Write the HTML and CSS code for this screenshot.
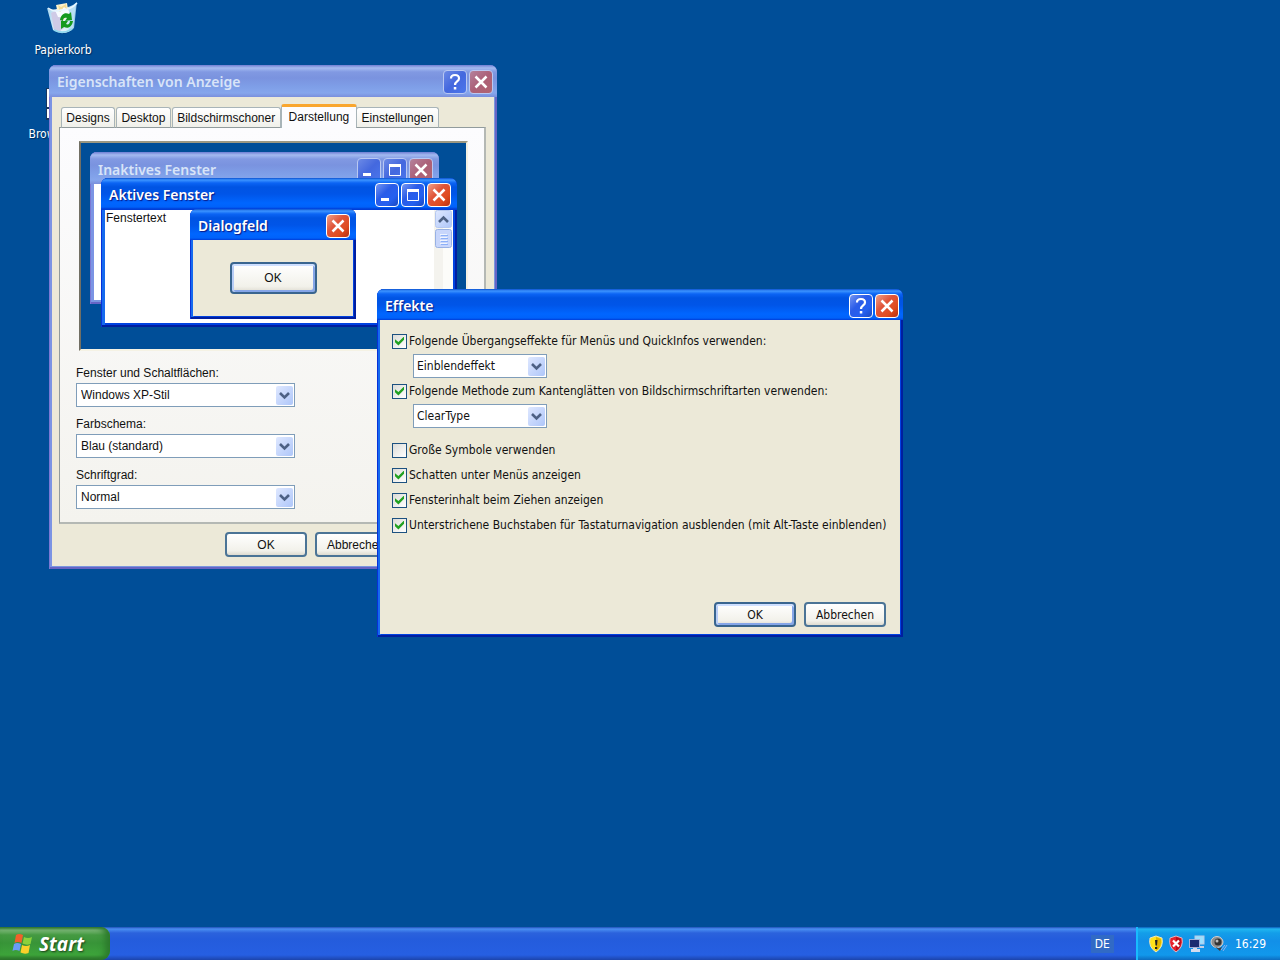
FILE: index.html
```html
<!DOCTYPE html>
<html lang="de">
<head>
<meta charset="utf-8">
<title>Eigenschaften von Anzeige</title>
<link rel="stylesheet" href="styles.css">
</head>
<body>
<svg width="0" height="0" class="defs" aria-hidden="true">
  <defs>
    <linearGradient id="btnface" x1="0" y1="0" x2="1" y2="1">
      <stop offset="0" stop-color="#dfe8ff"/><stop offset="1" stop-color="#aec6f9"/>
    </linearGradient>
    <linearGradient id="glass" x1="0" y1="0" x2="1" y2="0">
      <stop offset="0" stop-color="#9fd2ee"/><stop offset=".35" stop-color="#eef8fb"/><stop offset=".7" stop-color="#d3ecf5"/><stop offset="1" stop-color="#7ebce4"/>
    </linearGradient>
    <symbol id="arrow" viewBox="0 0 17 19">
      <rect width="17" height="19" rx="2" fill="url(#btnface)"/>
      <path d="M4 7l4.500 4.500L13 7" fill="none" stroke="#4d6185" stroke-width="2.600"/>
    </symbol>
    <symbol id="help" viewBox="0 0 20 20">
      <path d="M6 6.500C6 4 7.600 3 10 3s4 1.300 4 3.500c0 3-4 3-4 6.500" fill="none" stroke="currentColor" stroke-width="2.200"/>
      <rect x="8.800" y="15" width="2.500" height="2.500" fill="currentColor"/>
    </symbol>
    <symbol id="close" viewBox="0 0 20 20">
      <path d="M4.500 4.500l11 11M15.500 4.500l-11 11" fill="none" stroke="currentColor" stroke-width="2.500"/>
    </symbol>
    <symbol id="min" viewBox="0 0 20 20"><rect x="4" y="13" width="8" height="3" fill="currentColor"/></symbol>
    <symbol id="max" viewBox="0 0 20 20">
      <path d="M4.500 5v10.500h11V5" fill="none" stroke="currentColor"/><rect x="4" y="4" width="12" height="3" fill="currentColor"/>
    </symbol>
  </defs>
</svg>

<main class="desktop">
  <div class="icons">
    <div class="shortcut">
      <svg width="36" height="36" viewBox="0 0 36 36" aria-hidden="true">
        <path d="M5 10l6 22q8 4 15-1l7-26-5 2z" fill="#063c7a" opacity=".7"/>
        <path d="M2 8Q8 11 14 8Q24 9 32 2L29 28Q20 37 8 30Z" fill="url(#glass)"/>
        <path d="M11 5l11-2 2 13-9 7z" fill="#fbf3cf"/>
        <path d="M13 5l3 2 5-3 1 6-7 3z" fill="#f3dc94"/>
        <path d="M6 13l6-3 4 8 3 10-5 4-5-2z" fill="#cfcbe6"/>
        <path d="M10 10l5 2 4-5 5 4-1 7-10-1z" fill="#f7fbff"/>
        <path d="M24 8l7-4-3 23-4 4z" fill="#b9e0f4"/>
        <path d="M3 8Q10 13 16 10Q26 10 32 3" fill="none" stroke="#e9f7ff" stroke-width="1.500"/>
        <path d="M9 30q9 5 18-1" fill="none" stroke="#8fd8ef" stroke-width="2"/>
        <path d="M15 20c1-6 5-8 9-6l2-2 1 8-7 1 2-3c-2-1-4 0-4 3zM28 21c-1 6-5 8-9 6l-3 2v-8l7 0-2 3c2 1 4 0 4-3z" fill="#159a1d"/>
      </svg>
      <span>Papierkorb</span>
    </div>
    <div class="shortcut">
      <svg width="36" height="36" viewBox="0 0 36 36" aria-hidden="true">
        <rect x="1" y="4" width="34" height="32" fill="#17365f"/><rect x="2" y="5" width="32" height="18" fill="#fff"/><rect x="2" y="25" width="32" height="9" fill="#fff"/>
      </svg>
      <span>Browserwahl</span>
    </div>
  </div>

  <section class="window inactive properties" aria-label="Eigenschaften von Anzeige">
    <header class="titlebar">
      <h1>Eigenschaften von Anzeige</h1>
      <button class="cap" aria-label="Hilfe"><svg><use href="#help"/></svg></button>
      <button class="cap red" aria-label="Schließen"><svg><use href="#close"/></svg></button>
    </header>
    <div class="body">
      <nav class="tabs" role="tablist">
        <button role="tab" class="tab">Designs</button>
        <button role="tab" class="tab">Desktop</button>
        <button role="tab" class="tab">Bildschirmschoner</button>
        <button role="tab" class="tab selected" aria-selected="true">Darstellung</button>
        <button role="tab" class="tab">Einstellungen</button>
      </nav>
      <div class="page">
        <div class="preview">
          <div class="window inactive mini mini-inactive">
            <div class="titlebar">
              <h2>Inaktives Fenster</h2>
              <span class="cap"><svg><use href="#min"/></svg></span>
              <span class="cap"><svg><use href="#max"/></svg></span>
              <span class="cap red"><svg><use href="#close"/></svg></span>
            </div>
            <div class="client"></div>
          </div>
          <div class="window mini mini-active">
            <div class="titlebar">
              <h2>Aktives Fenster</h2>
              <span class="cap"><svg><use href="#min"/></svg></span>
              <span class="cap"><svg><use href="#max"/></svg></span>
              <span class="cap red"><svg><use href="#close"/></svg></span>
            </div>
            <div class="client">
              <span class="sample">Fenstertext</span>
              <svg class="scroll" viewBox="0 0 19 112" aria-hidden="true">
                <rect width="19" height="112" fill="#f4f3ee"/><rect x="9" width="10" height="112" fill="#fcfcf9"/>
                <rect x="1.500" y=".5" width="16" height="17" rx="2" fill="url(#btnface)" stroke="#b5c8f0"/>
                <path d="M5 12l4.500-4.500L14 12" fill="none" stroke="#4d6185" stroke-width="2.600"/>
                <rect x="1.500" y="19.500" width="16" height="18" rx="2" fill="#c8d6fb" stroke="#98b1e4"/>
                <path d="M6 24.500h7M6 27.500h7M6 30.500h7M6 33.500h7" stroke="#eef4fe"/><path d="M7 25.500h7M7 28.500h7M7 31.500h7M7 34.500h7" stroke="#8cb0f8"/>
              </svg>
            </div>
          </div>
          <div class="window mini-dialog">
            <div class="titlebar">
              <h2>Dialogfeld</h2>
              <span class="cap red"><svg><use href="#close"/></svg></span>
            </div>
            <div class="client beige"><button class="push default">OK</button></div>
          </div>
        </div>
        <div class="field">
          <label for="style">Fenster und Schaltflächen:</label>
          <div class="combo"><select id="style"><option>Windows XP-Stil</option></select><svg><use href="#arrow"/></svg></div>
        </div>
        <div class="field">
          <label for="scheme">Farbschema:</label>
          <div class="combo"><select id="scheme"><option>Blau (standard)</option></select><svg><use href="#arrow"/></svg></div>
        </div>
        <div class="field">
          <label for="size">Schriftgrad:</label>
          <div class="combo"><select id="size"><option>Normal</option></select><svg><use href="#arrow"/></svg></div>
        </div>
      </div>
      <footer class="actions">
        <button class="push">OK</button>
        <button class="push">Abbrechen</button>
        <button class="push">Übernehmen</button>
      </footer>
    </div>
  </section>

  <section class="window effects" role="dialog" aria-label="Effekte">
    <header class="titlebar">
      <h1>Effekte</h1>
      <button class="cap" aria-label="Hilfe"><svg><use href="#help"/></svg></button>
      <button class="cap red" aria-label="Schließen"><svg><use href="#close"/></svg></button>
    </header>
    <div class="body">
      <div class="options">
        <label class="check"><input type="checkbox" checked>Folgende Übergangseffekte für Menüs und QuickInfos verwenden:</label>
        <div class="combo"><select aria-label="Übergangseffekt"><option>Einblendeffekt</option></select><svg><use href="#arrow"/></svg></div>
        <label class="check"><input type="checkbox" checked>Folgende Methode zum Kantenglätten von Bildschirmschriftarten verwenden:</label>
        <div class="combo"><select aria-label="Kantenglättung"><option>ClearType</option></select><svg><use href="#arrow"/></svg></div>
      </div>
      <div class="options more">
        <label class="check"><input type="checkbox">Große Symbole verwenden</label>
        <label class="check"><input type="checkbox" checked>Schatten unter Menüs anzeigen</label>
        <label class="check"><input type="checkbox" checked>Fensterinhalt beim Ziehen anzeigen</label>
        <label class="check"><input type="checkbox" checked>Unterstrichene Buchstaben für Tastaturnavigation ausblenden (mit Alt-Taste einblenden)</label>
      </div>
      <footer class="actions">
        <button class="push default">OK</button>
        <button class="push">Abbrechen</button>
      </footer>
    </div>
  </section>
</main>

<footer class="taskbar">
  <button class="start">
    <svg width="22" height="20" viewBox="0 0 22 20" aria-hidden="true">
      <path d="M5 1q3-2 7 0L10.500 9q-4-2-7 0z" fill="#f2602a"/>
      <path d="M13 3q4 2 8 0L19.500 10q-4 1.500-8-.5z" fill="#8bd13c"/>
      <path d="M3 10q3-2 7 0L8.500 17q-4-2-7 0z" fill="#6a9cf6"/>
      <path d="M11 11q4 2 8 0L17.500 19q-4 1.500-8-.5z" fill="#fbd02a"/>
    </svg>
    Start
  </button>
  <span class="lang">DE</span>
  <div class="tray">
    <svg width="16" height="18" viewBox="0 0 16 18" aria-hidden="true">
      <path d="M8 1l6 2q2 9-6 14Q0 12 2 3z" fill="#ffe21a" stroke="#e8e4c0"/><path d="M8 2l5 2q1 8-5 12z" fill="#e2b400"/>
      <path d="M7 5h2.500L9 10.500H7.500zM7 12h2.200v2H7z" fill="#222"/>
    </svg>
    <svg width="16" height="18" viewBox="0 0 16 18" aria-hidden="true">
      <path d="M8 1l6 2q2 9-6 14Q0 12 2 3z" fill="#e8202c" stroke="#d8b8c4"/><path d="M8 2l5 2q1 8-5 12z" fill="#b80e1c"/>
      <path d="M5 5.500l6 6M11 5.500l-6 6" stroke="#fff" stroke-width="2.200"/>
    </svg>
    <svg width="18" height="18" viewBox="0 0 18 18" aria-hidden="true">
      <rect x="7" y="1" width="9" height="8" fill="#9be0ff" stroke="#b9c9e6"/><path d="M10 11h6v2h-6z" fill="#c4cfe4"/>
      <rect x="1.500" y="4.500" width="10" height="8" fill="#1b2c70" stroke="#a3b2d8"/><path d="M5 13h4v1h3v3H3v-3h2z" fill="#d4dcee"/>
    </svg>
    <svg width="18" height="18" viewBox="0 0 18 18" aria-hidden="true">
      <ellipse cx="7" cy="7" rx="6" ry="5.500" fill="#8d8d8d" stroke="#d0d0d0"/><path d="M3 10q5 5 9 2l-2 4z" fill="#3c3c3c"/>
      <circle cx="8" cy="7" r="3.500" fill="#333"/><circle cx="7" cy="6" r="1.500" fill="#bbb"/>
      <path d="M11 15l4-5M13 16l4-6" stroke="#8db4f2"/>
    </svg>
    <time>16:29</time>
  </div>
</footer>
</body>
</html>
```
FILE: styles.css
```css
* { box-sizing: border-box; }
body {
  margin: 0;
  min-height: 100vh;
  display: flex;
  flex-direction: column;
  background: #004e98;
  color: #111;
  font: 12px/16px "DejaVu Sans Condensed", "Noto Sans", sans-serif;
  overflow: hidden;
}
button, select, input { font: inherit; color: inherit; margin: 0; }
.defs { position: absolute; }
.desktop { flex: 1; position: relative; }

.icons { display: flex; flex-direction: column; gap: 26px; width: 126px; align-items: center; }
.shortcut { display: flex; flex-direction: column; align-items: center; gap: 6px; color: #fff; text-shadow: 1px 1px 1px #002c5c; }

/* windows */
.window {
  --edge: 3px;
  position: absolute;
  display: flex;
  flex-direction: column;
  padding: 0 var(--edge) var(--edge);
  border-radius: 7px 7px 0 0;
  background: #0042e0;
  box-shadow: inset 1px 0 #0831d9, inset -2px -2px #001ea0, inset 4px 0 #166aee;
}
.window.mini { --edge: 4px; }
.window.inactive { background: #7a96df; box-shadow: inset 1px 0 #7a78d4, inset -2px -2px #6664c4, inset 4px 0 #7c94e4; }
.titlebar {
  display: flex;
  align-items: center;
  gap: 2px;
  flex: none;
  height: 31px;
  margin: 0 calc(-1 * var(--edge));
  padding: 2px 4px 0 8px;
  border-radius: 7px 7px 0 0;
  background: linear-gradient(#0a50d0 0, #3c94ff 2px, #0b64f4 5px, #0054e3 9px, #0055e8 16px, #0066ff 25px, #0062fa 29px, #003dd7 31px);
  color: #fff;
}
.mini > .titlebar { height: 32px; padding-right: 6px; }
.properties > .titlebar { height: 32px; }
.mini-dialog > .titlebar { padding-right: 6px; }
.mini-inactive > .titlebar { padding-top: 4px; }
.inactive > .titlebar {
  background: linear-gradient(#6f7ed4 0, #a3baf0 3px, #8199e2 7px, #7a93df 13px, #7f9fe8 22px, #86a6ec 28px, #7a8fdc 32px);
  color: #d8e4f8;
}
h1, h2 { flex: 1; margin: 0; font: 600 14px/20px "Noto Sans", sans-serif; text-shadow: 1px 1px 1px #0a1883; }
.inactive > .titlebar h1, .inactive > .titlebar h2 { text-shadow: none; }
.cap {
  display: flex;
  width: 24px;
  height: 24px;
  padding: 1px;
  border: 1px solid #fff;
  border-radius: 4px;
  color: #fff;
  background: linear-gradient(135deg, #7596f2, #2a5ce8 40%, #2560f0 70%, #1a48c0);
}
.cap svg { width: 20px; height: 20px; }
.cap.red { background: linear-gradient(135deg, #f0a088, #e0553a 40%, #e04c20 70%, #b83010); }
.inactive > .titlebar .cap { border-color: #b9c8f2; background: linear-gradient(135deg, #6c8ae6, #4468de 50%, #4a76ec); }
.inactive > .titlebar .cap.red { background: linear-gradient(135deg, #b4829c, #ac6078 50%, #b06470); }
.body { flex: 1; display: flex; flex-direction: column; background: #ece9d8; }

.properties { left: 49px; top: 65px; width: 448px; font-family: "Liberation Sans", sans-serif; }
.properties > .body { padding: 7px 8px 9px 7px; }
.tabs { display: flex; align-items: flex-end; width: 381px; height: 24px; padding-left: 2px; margin-bottom: -1px; z-index: 1; }
.tab {
  flex: 1 1 auto;
  height: 21px;
  margin-right: 1px;
  padding: 0 4px;
  border: 1px solid #a8b4b8;
  border-bottom-color: #919b9c;
  border-radius: 3px 3px 0 0;
  background: linear-gradient(#fff, #f0f0ea);
  white-space: nowrap;
}
.tab.selected { flex: none; height: 24px; margin: 0 -1px; padding: 0 7px 2px; border-top: 3px solid #f9a62e; border-bottom: 0; background: #fcfcfe; }
.page {
  flex: 1;
  border: 1px solid #919b9c;
  border-width: 1px 2px 2px 1px;
  border-color: #919b9c #b4b8b4 #b4b8b4 #919b9c;
  background: linear-gradient(#fcfcfe, #f4f3ee);
  padding: 13px 15px 4px 16px;
  display: flex;
  flex-direction: column;
}
.preview {
  position: relative;
  height: 210px;
  margin: 0 1px 14px 3px;
  border: 2px solid #716f64;
  border-color: #9c9882 #f5f2e4 #f5f2e4 #716f64;
  background: #004e98;
}
.field { display: flex; flex-direction: column; gap: 2px; margin-bottom: 9px; }
.combo { display: grid; width: 219px; height: 24px; }
.combo > * { grid-area: 1 / 1; }
.combo select { appearance: none; width: 100%; height: 24px; padding: 0 24px 0 4px; border: 1px solid #7f9db9; border-radius: 0; background: #fff; }
.combo svg { width: 17px; height: 19px; place-self: center end; margin-right: 2px; pointer-events: none; }
.actions { display: flex; justify-content: flex-end; gap: 8px; }
.properties .actions { padding-top: 8px; margin-right: -1px; }
.push {
  width: 82px;
  height: 25px;
  padding: 0;
  border: 2px solid #4b7496;
  border-radius: 4px;
  background: linear-gradient(#fff, #f2f1ea 80%, #dedbd0);
}
.push.default { border-color: #39658f; box-shadow: inset 0 2px #cedfff, inset 2px 0 #b8cdf6, inset -2px -2px #86a6e8; }

/* preview windows */
.client { flex: 1; display: flex; background: #fff; }
.client.beige { background: #ece9d8; align-items: center; justify-content: center; }
.client .push { width: 87px; height: 32px; }
.mini-inactive { left: 9px; top: 9px; width: 349px; height: 152px; }
.mini-active { left: 20px; top: 35px; width: 356px; height: 149px; }
.mini-dialog { left: 109px; top: 66px; width: 166px; height: 110px; }
.sample { flex: 1; padding-left: 1px; }
.scroll { width: 19px; height: 112px; }

.effects { left: 377px; top: 289px; width: 526px; height: 348px; }
.effects > .body { padding: 12px 14px 7px 12px; }
.options { display: flex; flex-direction: column; gap: 4px; }
.options.more { gap: 9px; margin-top: 14px; }
.options .combo { width: 134px; margin-left: 21px; }
.options .combo select { padding-left: 3px; }
.check { display: flex; align-items: center; gap: 2px; height: 18px; white-space: nowrap; }
.options.more .check { height: 16px; }
.check input { appearance: none; width: 15px; height: 15px; flex: none; border: 1px solid #1c5180; background: linear-gradient(135deg, #dcdcd7, #fff); }
.check input:checked::before { content: ""; display: block; width: 9px; height: 9px; margin: 2px; background: #21a121; clip-path: polygon(0 30%, 38% 62%, 100% 0, 100% 35%, 38% 100%, 0 65%); }
.effects .actions { margin-top: auto; }

/* taskbar */
.taskbar {
  display: flex;
  align-items: stretch;
  height: 33px;
  background: linear-gradient(#1f4fb8 0, #4a8ff2 2px, #2b62dc 6px, #245cdc 12px, #265fe2 28px, #1c44ac 33px);
  color: #fff;
}
.start {
  display: flex;
  align-items: center;
  gap: 6px;
  width: 110px;
  padding: 0 0 0 11px;
  border: 0;
  border-radius: 0 9px 9px 0;
  color: #fff;
  background: linear-gradient(#2f6f2c 0, #7fba7b 3px, #459a42 8px, #389438 16px, #3ea53b 28px, #2a6c28 33px);
  box-shadow: inset -5px 0 6px #2c7a2c;
  font: italic 700 19px/24px "Open Sans", "Noto Sans", sans-serif;
  text-shadow: 1px 1px 2px #1b3d1a;
}
.lang { margin-left: auto; align-self: center; padding: 1px 4px; background: #316ac5; }
.tray {
  display: flex;
  align-items: center;
  gap: 4px;
  margin-left: 22px;
  padding: 0 14px 0 10px;
  border-left: 2px solid #18bbff;
  background: linear-gradient(#0c59b9 0, #20b5f0 2px, #139ee9 6px, #1290e8 14px, #1198ec 28px, #0d6cc0 33px);
}
.tray time { margin-left: 3px; }
```
